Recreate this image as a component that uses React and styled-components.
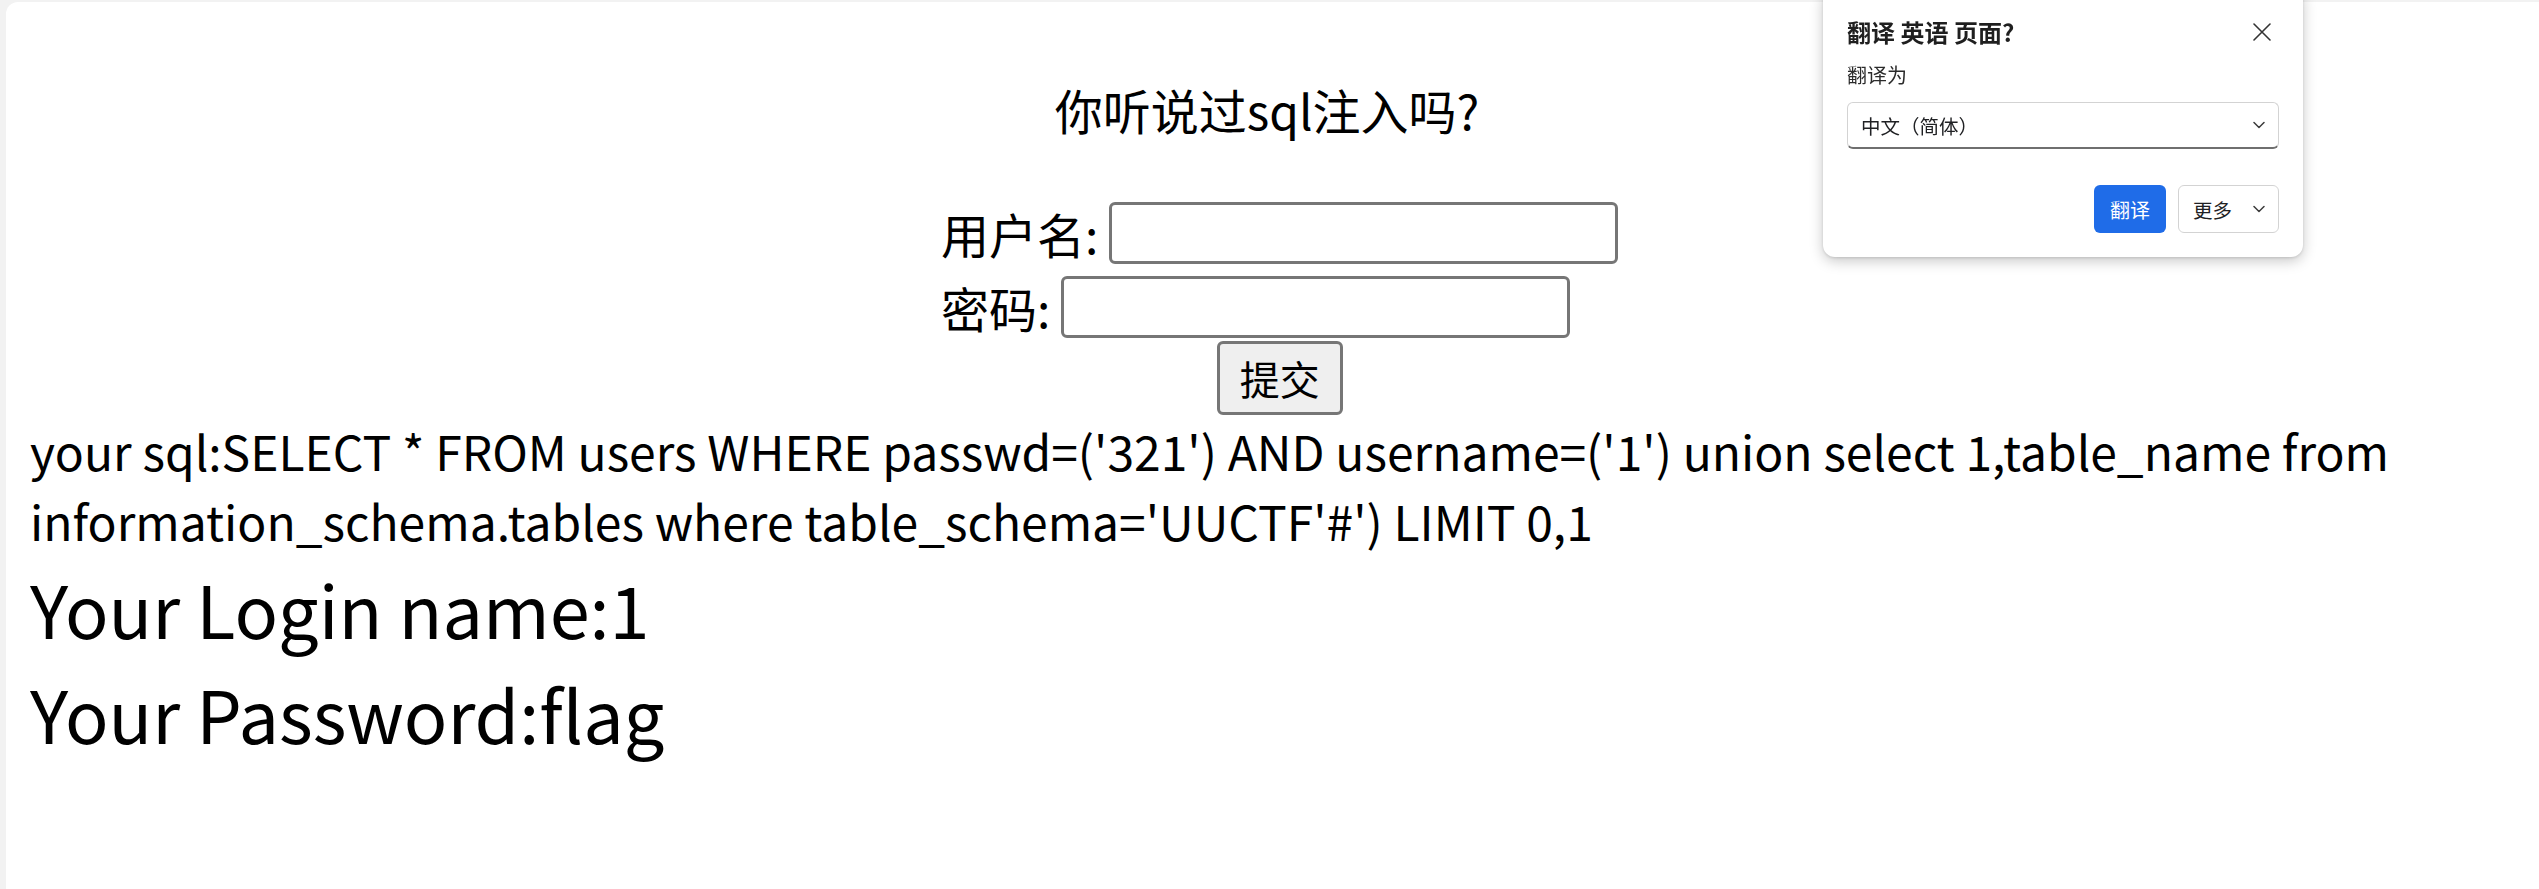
import React from 'react';
import styled, { createGlobalStyle } from 'styled-components';

const GlobalStyle = createGlobalStyle`
    html, body {
        margin: 0;
        padding: 0;
    }
    body {
        background: #f2f2f2;
        font-family: "Noto Sans CJK SC", "Noto Sans", sans-serif;
        color: #000;
        overflow: hidden;
    }
`;

const Frame = styled.div`
    margin: 2px 0 0 6px;
    min-height: 887px;
    box-sizing: border-box;
    padding: 24px;
    background: #fff;
    border-top-left-radius: 12px;
`;

const Title = styled.div`
    margin-top: 48px;
    padding-right: 11px;
    text-align: center;
    font-size: 48px;
`;

const LoginForm = styled.form`
    display: flex;
    flex-direction: column;
    width: fit-content;
    margin: 52px 0 0 911px;
`;

const FieldRow = styled.div`
    display: flex;
    align-items: center;
    gap: 11px;
    height: 74px;
`;

const FieldLabel = styled.label`
    font-size: 48px;
    line-height: 1;
`;

const TextInput = styled.input`
    width: 509px;
    height: 62px;
    box-sizing: border-box;
    border: 3px solid #767676;
    border-radius: 6px;
    background: #fff;
    padding: 0 6px;
    font-size: 40px;
    outline: none;
`;

const SubmitButton = styled.button`
    align-self: center;
    margin-top: -3px;
    width: 126px;
    height: 74px;
    padding: 0;
    border: 3px solid #767676;
    border-radius: 6px;
    background: #efefef;
    font-family: inherit;
    font-size: 40px;
    color: #000;
`;

const SqlText = styled.div`
    font-size: 48px;
`;

const ResultLine = styled.div`
    font-size: 72px;
`;

const Bubble = styled.div`
    position: fixed;
    top: -12px;
    left: 1823px;
    width: 480px;
    box-sizing: border-box;
    padding: 28px 24px 24px;
    background: #fff;
    border-radius: 12px;
    box-shadow: 0 4px 14px rgba(0, 0, 0, 0.22), 0 1px 3px rgba(0, 0, 0, 0.12);
    font-family: "Noto Sans CJK SC", sans-serif;
    color: #202124;
`;

const BubbleHeader = styled.div`
    display: flex;
    align-items: center;
    justify-content: space-between;
    height: 32px;
`;

const BubbleTitle = styled.div`
    font-size: 24px;
    font-weight: 700;
    line-height: 32px;
    color: #1f1f1f;
`;

const CloseButton = styled.button`
    display: flex;
    align-items: center;
    justify-content: center;
    width: 34px;
    height: 34px;
    padding: 0;
    border: none;
    background: transparent;
    color: #333;
`;

const BubbleLabel = styled.div`
    margin-top: 13px;
    font-size: 20px;
    line-height: 28px;
    color: #2b2b2b;
`;

const LangSelect = styled.div`
    display: flex;
    align-items: center;
    justify-content: space-between;
    margin-top: 13px;
    height: 47px;
    box-sizing: border-box;
    padding: 0 13px 0 13px;
    border: 1px solid #d3d3d3;
    border-bottom: 2px solid #6f6f6f;
    border-radius: 6px;
    font-size: 19.5px;
    color: #202124;
`;

const Actions = styled.div`
    display: flex;
    justify-content: flex-end;
    gap: 12px;
    margin-top: 36px;
`;

const PrimaryButton = styled.button`
    width: 72px;
    height: 48px;
    padding: 0;
    border: none;
    border-radius: 6px;
    background: #1f6ce8;
    color: #fff;
    font-family: inherit;
    font-size: 20px;
`;

const MoreButton = styled.button`
    display: flex;
    align-items: center;
    justify-content: space-between;
    width: 101px;
    height: 48px;
    box-sizing: border-box;
    padding: 0 13px 0 14px;
    border: 1px solid #d3d3d3;
    border-radius: 6px;
    background: #fff;
    color: #202124;
    font-family: inherit;
    font-size: 19.5px;
`;

const Chevron = () => (
    <svg width="12" height="8" viewBox="0 0 12 8" fill="none">
        <path d="M1 1.5 L6 6.5 L11 1.5" stroke="#3c3c3c" strokeWidth="1.5" strokeLinecap="round" strokeLinejoin="round" />
    </svg>
);

const CloseIcon = () => (
    <svg width="18" height="18" viewBox="0 0 18 18" fill="none">
        <path d="M1 1 L17 17 M17 1 L1 17" stroke="#333" strokeWidth="1.6" strokeLinecap="round" />
    </svg>
);

const TranslateBubble = () => (
    <Bubble>
        <BubbleHeader>
            <BubbleTitle>翻译 英语 页面?</BubbleTitle>
            <CloseButton aria-label="关闭">
                <CloseIcon />
            </CloseButton>
        </BubbleHeader>
        <BubbleLabel>翻译为</BubbleLabel>
        <LangSelect>
            <span>中文（简体）</span>
            <Chevron />
        </LangSelect>
        <Actions>
            <PrimaryButton>翻译</PrimaryButton>
            <MoreButton>
                <span>更多</span>
                <Chevron />
            </MoreButton>
        </Actions>
    </Bubble>
);

const App = () => (
    <>
        <GlobalStyle />
        <Frame>
            <Title>你听说过sql注入吗?</Title>
            <LoginForm onSubmit={(e) => e.preventDefault()}>
                <FieldRow>
                    <FieldLabel>用户名:</FieldLabel>
                    <TextInput type="text" name="username" />
                </FieldRow>
                <FieldRow>
                    <FieldLabel>密码:</FieldLabel>
                    <TextInput type="password" name="passwd" />
                </FieldRow>
                <SubmitButton type="submit">提交</SubmitButton>
            </LoginForm>
            <SqlText>
                your sql:SELECT * FROM users WHERE passwd=('321') AND username=('1') union select 1,table_name from information_schema.tables where table_schema='UUCTF'#') LIMIT 0,1
            </SqlText>
            <ResultLine>Your Login name:1</ResultLine>
            <ResultLine>Your Password:flag</ResultLine>
        </Frame>
        <TranslateBubble />
    </>
);

export default App;
